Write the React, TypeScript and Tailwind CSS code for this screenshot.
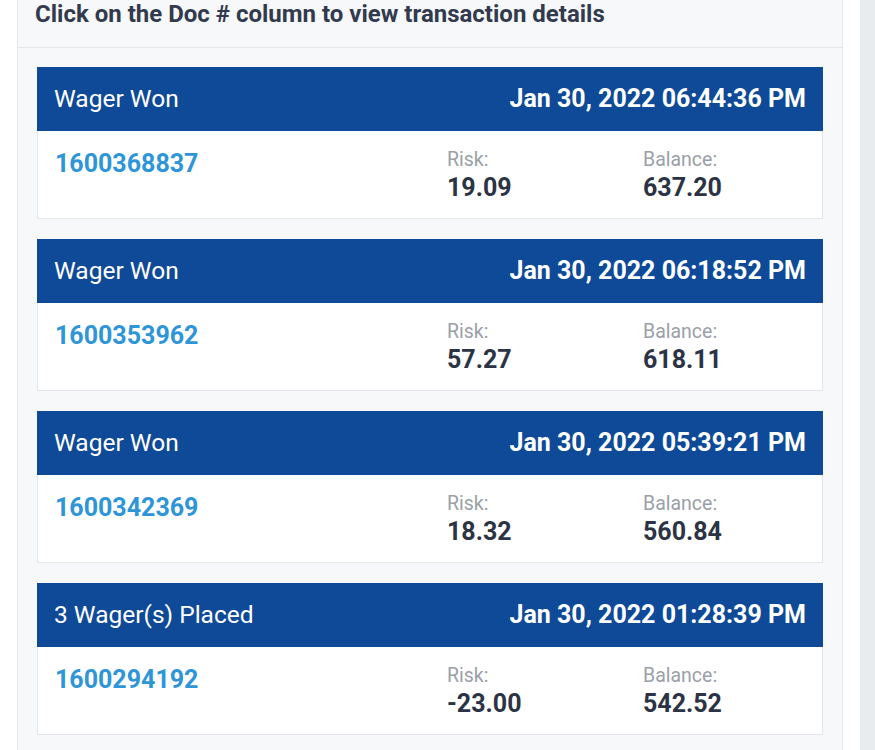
import React from "react";

const rows = [
  { title: "Wager Won", date: "Jan 30, 2022 06:44:36 PM", doc: "1600368837", risk: "19.09", balance: "637.20" },
  { title: "Wager Won", date: "Jan 30, 2022 06:18:52 PM", doc: "1600353962", risk: "57.27", balance: "618.11" },
  { title: "Wager Won", date: "Jan 30, 2022 05:39:21 PM", doc: "1600342369", risk: "18.32", balance: "560.84" },
  { title: "3 Wager(s) Placed", date: "Jan 30, 2022 01:28:39 PM", doc: "1600294192", risk: "-23.00", balance: "542.52" },
];

export default function App() {
  return (
    <div className="h-[750px] w-[875px] overflow-hidden bg-white flex" style={{ fontFamily: "Roboto, 'Noto Sans', sans-serif" }}>
      <div className="w-[860px] pl-[17px] pr-[17px]">
        <div className="-mt-[20px] border border-[#e4e7eb] bg-[#f7f8f9]">
          <div className="h-[67px] pt-[19px] pl-[17px] border-b border-[#e4e7eb]">
            <div className="text-[24px] leading-[28px] font-bold text-[#323a4e] whitespace-nowrap">
              Click on the Doc # column to view transaction details
            </div>
          </div>
          <div className="px-[19px] pt-[19px] flex flex-col gap-[20px] pb-[40px]">
            {rows.map((r, i) => (
              <div key={i} className="border border-[#e3e6ea] bg-white">
                <div className="h-[64px] bg-[#0e4a98] flex items-center justify-between px-[17px] -mx-px -mt-px">
                  <span className="text-[24.5px] text-white">{r.title}</span>
                  <span className="text-[25px] font-bold text-white">{r.date}</span>
                </div>
                <div className="h-[87px] grid grid-cols-[392px_196px_1fr] pl-[17px] pt-[15px]">
                  <div className="text-[25px] font-bold text-[#2e95d8] leading-[32px] pt-[2px]">{r.doc}</div>
                  <div className="flex flex-col">
                    <span className="text-[19.5px] text-[#9aa0a8] leading-[26px] pt-[1px]">Risk:</span>
                    <span className="text-[25px] font-bold text-[#2b3344] leading-[30px]">{r.risk}</span>
                  </div>
                  <div className="flex flex-col">
                    <span className="text-[19.5px] text-[#9aa0a8] leading-[26px] pt-[1px]">Balance:</span>
                    <span className="text-[25px] font-bold text-[#2b3344] leading-[30px]">{r.balance}</span>
                  </div>
                </div>
              </div>
            ))}
          </div>
        </div>
      </div>
      <div className="w-[15px] bg-[#e9ecef]" />
    </div>
  );
}
